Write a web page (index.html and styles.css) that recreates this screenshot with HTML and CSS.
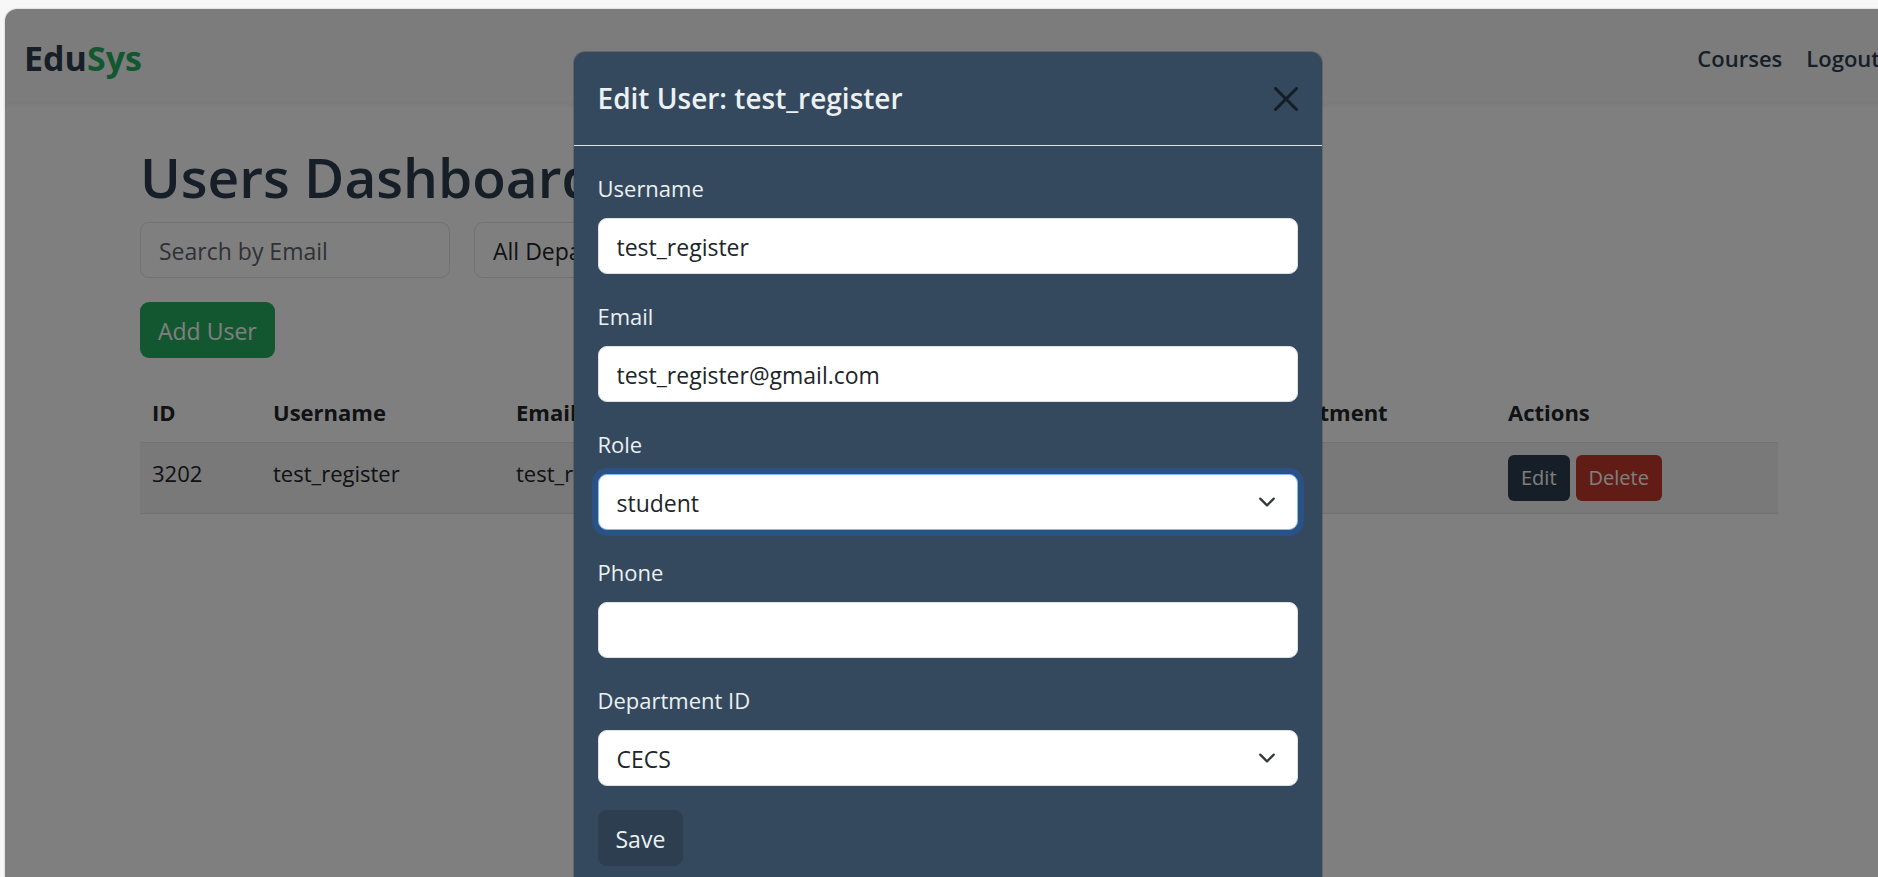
FILE: index.html
```
<!DOCTYPE html>
<html lang="en">
<head>
<meta charset="utf-8">
<title>EduSys - Users Dashboard</title>
<link rel="stylesheet" href="styles.css">
</head>
<body>
<div class="app">
  <header class="navbar">
    <a class="brand" href="#">Edu<span class="brand-accent">Sys</span></a>
    <nav class="nav-links">
      <a href="#">Courses</a>
      <a href="#">Logout</a>
    </nav>
  </header>
  <main class="dashboard">
    <h1 class="page-title">Users Dashboard</h1>
    <div class="filters">
      <input class="control" type="text" placeholder="Search by Email" aria-label="Search by Email">
      <select class="control select" aria-label="Department filter"><option>All Departments</option></select>
    </div>
    <button class="btn btn-add" type="button">Add User</button>
    <table class="users">
      <colgroup><col class="col-id"><col class="col-username"><col class="col-email"><col class="col-role"><col class="col-phone"><col class="col-department"><col class="col-actions"></colgroup>
      <thead>
        <tr><th>ID</th><th>Username</th><th>Email</th><th>Role</th><th>Phone</th><th>Department</th><th>Actions</th></tr>
      </thead>
      <tbody>
        <tr>
          <td>3202</td><td>test_register</td><td>test_register@gmail.com</td><td>student</td><td></td><td></td>
          <td><div class="actions"><button class="btn-small btn-edit" type="button">Edit</button><button class="btn-small btn-delete" type="button">Delete</button></div></td>
        </tr>
      </tbody>
    </table>
  </main>
  <div class="backdrop">
    <div class="modal" role="dialog" aria-labelledby="modal-title">
      <div class="modal-header">
        <h2 class="modal-title" id="modal-title">Edit User: test_register</h2>
        <button class="close" type="button" aria-label="Close">
          <svg viewBox="0 0 16 16" width="24" height="24" aria-hidden="true"><path d="M.293.293a1 1 0 0 1 1.414 0L8 6.586 14.293.293a1 1 0 1 1 1.414 1.414L9.414 8l6.293 6.293a1 1 0 0 1-1.414 1.414L8 9.414l-6.293 6.293a1 1 0 0 1-1.414-1.414L6.586 8 .293 1.707a1 1 0 0 1 0-1.414z"/></svg>
        </button>
      </div>
      <form class="modal-body">
        <div class="field">
          <label for="username">Username</label>
          <input class="control" id="username" type="text" value="test_register">
        </div>
        <div class="field">
          <label for="email">Email</label>
          <input class="control" id="email" type="email" value="test_register@gmail.com">
        </div>
        <div class="field">
          <label for="role">Role</label>
          <select class="control select is-focused" id="role"><option>student</option></select>
        </div>
        <div class="field">
          <label for="phone">Phone</label>
          <input class="control" id="phone" type="text">
        </div>
        <div class="field">
          <label for="department">Department ID</label>
          <select class="control select" id="department"><option>CECS</option></select>
        </div>
        <button class="btn btn-save" type="button">Save</button>
      </form>
    </div>
  </div>
</div>
</body>
</html>
```
FILE: styles.css
```
* { box-sizing: border-box; }

body {
  margin: 0;
  padding: 9px 0 0 5px;
  height: 100vh;
  overflow: hidden;
  background: #f7f7f7;
  color: #212529;
  font: 22px/36px "Open Sans", "Noto Sans", sans-serif;
}

button, input, select { font: inherit; }

/* The window runs past the right edge of the viewport */
.app {
  position: relative;
  height: 100vh;
  margin-right: -12px;
  border-radius: 12px 12px 0 0;
  overflow: hidden;
  background: #fff;
  box-shadow: 0 0 2px rgba(0, 0, 0, .3);
}

.navbar {
  display: flex;
  align-items: center;
  justify-content: space-between;
  padding: 21px 10px 16px 19px;
  background: #f9f9f9;
  box-shadow: 0 3px 6px rgba(0, 0, 0, .05);
}

.brand {
  color: #2c3e50;
  font-size: 34px;
  font-weight: 700;
  line-height: 56px;
  text-decoration: none;
}
.brand-accent { color: #27ae60; }

.nav-links { display: flex; gap: 24px; }
.nav-links a { color: #2c3e50; font-weight: 600; text-decoration: none; }

.dashboard { padding: 39px 112px 0 135px; }

.page-title {
  margin: 0 0 9px;
  color: #2c3e50;
  font-size: 55px;
  font-weight: 600;
  line-height: 72px;
}

.filters {
  display: grid;
  grid-template-columns: 310px 310px;
  gap: 24px;
  margin-bottom: 24px;
}

.control {
  display: block;
  width: 100%;
  height: 56px;
  padding: 10px 18px 8px;
  border: 1px solid #dee2e6;
  border-radius: 9px;
  background-color: #fff;
  color: #212529;
  font-size: 23px;
  outline: 0;
}
.control::placeholder { color: #5f6368; opacity: 1; }

.select {
  appearance: none;
  background-image: url("data:image/svg+xml,%3Csvg xmlns='http://www.w3.org/2000/svg' viewBox='0 0 16 16'%3E%3Cpath fill='none' stroke='%23343a40' stroke-linecap='round' stroke-linejoin='round' stroke-width='2' d='m2 5 6 6 6-6'/%3E%3C/svg%3E");
  background-repeat: no-repeat;
  background-position: right 18px center;
  background-size: 24px 18px;
}

.is-focused {
  border-color: #86b7fe;
  box-shadow: 0 0 0 6px rgba(13, 110, 253, .25);
}

.btn {
  display: block;
  height: 56px;
  padding: 2px 18px 0;
  border: 0;
  border-radius: 9px;
  font-size: 23px;
}
.btn-add { margin-bottom: 24px; background: #27ae60; color: #fff; }
.btn-save { background: #2c3e50; color: #ecf0f1; }

.users {
  width: 100%;
  border-collapse: collapse;
  table-layout: fixed;
}
.users th, .users td {
  padding: 12px;
  border-bottom: 1px solid #dee2e6;
  text-align: left;
  vertical-align: top;
}
.users td { background: #f2f2f2; }
.col-id { width: 121px; }
.col-username { width: 243px; }
.col-email { width: 320px; }
.col-role { width: 170px; }
.col-phone { width: 247px; }
.col-department { width: 255px; }

.actions { display: flex; gap: 6px; }
.btn-small {
  height: 46px;
  padding: 0 13px;
  border: 0;
  border-radius: 6px;
  color: #fff;
  font-size: 20px;
}
.btn-edit { background: #2c3e50; }
.btn-delete { background: #c0392b; }

.backdrop {
  position: absolute;
  inset: 0;
  padding-top: 42px;
  background: rgba(0, 0, 0, .5);
}

.modal {
  width: 750px;
  margin: 0 auto;
  border: 1px solid rgba(0, 0, 0, .18);
  border-radius: 12px;
  background: #34495e;
  background-clip: padding-box;
  color: #ecf0f1;
}

.modal-header {
  display: flex;
  align-items: center;
  justify-content: space-between;
  padding: 24px;
  border-bottom: 1px solid #dee2e6;
}
.modal-title { margin: 0; font-size: 28px; font-weight: 600; line-height: 45px; }

.close {
  display: flex;
  padding: 0;
  border: 0;
  background: none;
  color: #000;
  opacity: .6;
}

.modal-body { padding: 24px; }
.field { margin-bottom: 24px; }
.field label { display: block; margin-bottom: 12px; }
```
